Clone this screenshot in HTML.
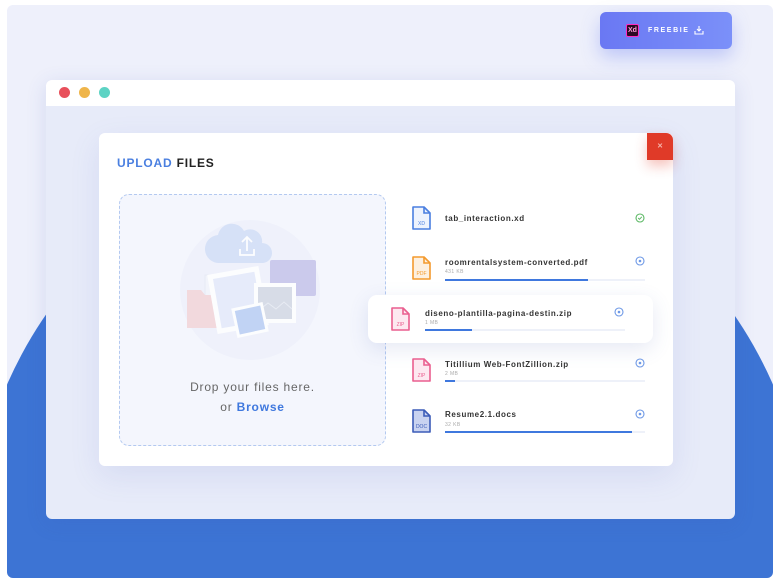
<!DOCTYPE html>
<html><head><meta charset="utf-8"><style>
*{margin:0;padding:0;box-sizing:border-box}
html,body{width:780px;height:586px;overflow:hidden}
body{background:#fff;font-family:"Liberation Sans",sans-serif;position:relative}
.outer{position:absolute;left:7px;top:5px;width:766px;height:573px;background:#eef0fb;border-radius:6px;overflow:hidden}
.hill{position:absolute;left:-35px;top:129px;width:836px;height:836px;border-radius:50%;background:#3d74d4}
.win{position:absolute;left:46px;top:80px;width:689px;height:439px;background:#e7ebf9;border-radius:6px;overflow:hidden;box-shadow:0 4px 20px rgba(60,90,180,.15)}
.bar{height:26px;background:#fff}
.dot{position:absolute;top:7px;width:11px;height:11px;border-radius:50%}
.card{position:absolute;left:99px;top:133px;width:574px;height:333px;background:#fff;border-radius:6px;box-shadow:0 10px 30px rgba(90,110,200,.12)}
.close{position:absolute;left:647px;top:133px;width:26px;height:27px;background:#e03a28;border-top-right-radius:7px;color:#f6b7ae;font-size:7px;text-align:center;line-height:27px;font-weight:bold;box-shadow:0 6px 12px rgba(224,58,40,.3)}
.title{position:absolute;left:117px;top:156px;font-size:12px;font-weight:bold;letter-spacing:.8px;color:#222}
.title span{color:#4a7fe0}
.drop{position:absolute;left:119px;top:194px;width:267px;height:252px;background:#f4f6fd;border:1.5px dashed #b3c9f0;border-radius:10px}
.dt{position:absolute;left:119px;width:267px;text-align:center;font-size:12px;color:#666;letter-spacing:.8px}
.dt b{color:#3f78de}
.name{position:absolute;font-size:8px;font-weight:bold;color:#333;letter-spacing:.6px}
.sz{position:absolute;font-size:5px;color:#aaa;letter-spacing:.4px}
.pb{position:absolute;height:2px;background:#eef1f9;width:200px}
.pb i{display:block;height:2px;background:#3f78de}
.ic{position:absolute}
.float{position:absolute;left:368px;top:295px;width:285px;height:48px;background:#fff;border-radius:9px;box-shadow:0 6px 20px rgba(80,100,180,.14)}
.free{position:absolute;left:600px;top:12px;width:132px;height:37px;border-radius:6px;background:linear-gradient(90deg,#6a78f3,#7b90f9);box-shadow:0 8px 18px rgba(100,120,240,.35);color:#fff;font-size:7px;letter-spacing:1.6px;font-weight:bold}
</style></head><body>
<div class="outer"><div class="hill"></div></div>
<div class="free"><div style="position:absolute;left:26px;top:12px;width:13px;height:13px;background:#2a0a24;border:1px solid #ff2bc2;border-radius:2px;color:#ff9bd8;font-size:7px;letter-spacing:0;line-height:11px;text-align:center">Xd</div><div style="position:absolute;left:48px;top:15px">FREEBIE</div>
<svg style="position:absolute;left:94px;top:13px" width="10" height="10" viewBox="0 0 10 10" fill="none" stroke="#fff" stroke-width="1.1"><path d="M5 1v5M3 4l2 2 2-2M1 6v3h8V6"/></svg></div>
<div class="win"><div class="bar"></div>
<div class="dot" style="left:13px;background:#e8505b"></div><div class="dot" style="left:33px;background:#efb54a"></div><div class="dot" style="left:53px;background:#5dd3c4"></div></div>
<div class="card"></div>
<div class="close">✕</div>
<div class="title"><span>UPLOAD</span> FILES</div>
<div class="drop"></div>
<svg class="ic" style="left:170px;top:215px;opacity:.8" width="160" height="150" viewBox="0 0 160 150">
<ellipse cx="80" cy="75" rx="70" ry="70" fill="#eef1fb"/>
<rect x="35" y="60" width="40" height="40" fill="#f2f4fb" stroke="#e4e8f4"/>
<rect x="100" y="45" width="46" height="36" rx="2" fill="#c2c0e8"/>
<path d="M17 75h14l4 5h20v33H17z" fill="#f2d2d6"/>
<path d="M48 20a14 14 0 0 1 26-4a12 12 0 0 1 18 12a10 10 0 0 1 0 20H50a14 14 0 0 1-2-28z" fill="#cfdcf6"/>
<path d="M77 22v14M72 27l5-5 5 5M70 34v6h14v-6" stroke="#fff" stroke-width="1.8" fill="none"/>
<g transform="rotate(-10 68 85)"><rect x="42" y="55" width="52" height="60" fill="#fff"/><rect x="47" y="60" width="42" height="50" fill="#e3e9fa"/></g>
<rect x="84" y="68" width="42" height="40" fill="#fff"/><rect x="88" y="72" width="34" height="32" fill="#d0d6e2"/>
<path d="M88 96l10-8 8 6 8-7 8 7" stroke="#e6eaf2" fill="none"/>
<g transform="rotate(-12 80 105)"><rect x="64" y="90" width="32" height="30" fill="#fff"/><rect x="67" y="93" width="26" height="24" fill="#b5cbf3"/></g>
</svg>
<div class="dt" style="top:380px">Drop your files here.</div>
<div class="dt" style="top:400px">or <b>Browse</b></div>

<svg class="ic" style="left:411px;top:205px" width="22" height="26" viewBox="0 0 22 26"><path d="M2 2h11l6 6v16H2z" fill="#eef3fd" stroke="#4a7fe0" stroke-width="1.6" stroke-linejoin="round"/><path d="M13 2v6h6" fill="none" stroke="#4a7fe0" stroke-width="1.6"/><text x="10.5" y="20" font-size="5" fill="#4a7fe0" text-anchor="middle" font-family="Liberation Sans">XD</text></svg>
<div class="name" style="left:445px;top:214px">tab_interaction.xd</div>
<svg class="ic" style="left:635px;top:213px" width="10" height="10"><circle cx="5" cy="5" r="4" fill="none" stroke="#5bb864" stroke-width="1.1"/><path d="M3.2 5l1.3 1.3 2.3-2.5" fill="none" stroke="#5bb864"/></svg>

<svg class="ic" style="left:411px;top:255px" width="22" height="26" viewBox="0 0 22 26"><path d="M2 2h11l6 6v16H2z" fill="#fdf0e0" stroke="#f39a2e" stroke-width="1.6" stroke-linejoin="round"/><path d="M13 2v6h6" fill="none" stroke="#f39a2e" stroke-width="1.6"/><text x="10.5" y="20" font-size="5" fill="#f39a2e" text-anchor="middle" font-family="Liberation Sans">PDF</text></svg>
<div class="name" style="left:445px;top:258px">roomrentalsystem-converted.pdf</div>
<div class="sz" style="left:445px;top:269px">431 KB</div>
<div class="pb" style="left:445px;top:279px"><i style="width:143px"></i></div>
<svg class="ic" style="left:635px;top:256px" width="10" height="10"><circle cx="5" cy="5" r="4" fill="none" stroke="#6d98e6" stroke-width="1.1"/><circle cx="5" cy="5" r="1.3" fill="#6d98e6"/></svg>

<div class="float"></div>
<svg class="ic" style="left:390px;top:306px" width="22" height="26" viewBox="0 0 22 26"><path d="M2 2h11l6 6v16H2z" fill="#fde8f0" stroke="#ea5f8f" stroke-width="1.6" stroke-linejoin="round"/><path d="M13 2v6h6" fill="none" stroke="#ea5f8f" stroke-width="1.6"/><text x="10.5" y="20" font-size="5" fill="#ea5f8f" text-anchor="middle" font-family="Liberation Sans">ZIP</text></svg>
<div class="name" style="left:425px;top:309px">diseno-plantilla-pagina-destin.zip</div>
<div class="sz" style="left:425px;top:320px">1 MB</div>
<div class="pb" style="left:425px;top:329px"><i style="width:47px"></i></div>
<svg class="ic" style="left:614px;top:307px" width="10" height="10"><circle cx="5" cy="5" r="4" fill="none" stroke="#6d98e6" stroke-width="1.1"/><circle cx="5" cy="5" r="1.3" fill="#6d98e6"/></svg>

<svg class="ic" style="left:411px;top:357px" width="22" height="26" viewBox="0 0 22 26"><path d="M2 2h11l6 6v16H2z" fill="#fde8f0" stroke="#ea5f8f" stroke-width="1.6" stroke-linejoin="round"/><path d="M13 2v6h6" fill="none" stroke="#ea5f8f" stroke-width="1.6"/><text x="10.5" y="20" font-size="5" fill="#ea5f8f" text-anchor="middle" font-family="Liberation Sans">ZIP</text></svg>
<div class="name" style="left:445px;top:360px">Titillium Web-FontZillion.zip</div>
<div class="sz" style="left:445px;top:371px">2 MB</div>
<div class="pb" style="left:445px;top:380px"><i style="width:10px"></i></div>
<svg class="ic" style="left:635px;top:358px" width="10" height="10"><circle cx="5" cy="5" r="4" fill="none" stroke="#6d98e6" stroke-width="1.1"/><circle cx="5" cy="5" r="1.3" fill="#6d98e6"/></svg>

<svg class="ic" style="left:411px;top:408px" width="22" height="26" viewBox="0 0 22 26"><path d="M2 2h11l6 6v16H2z" fill="#c9d3f0" stroke="#3c5cb8" stroke-width="1.6" stroke-linejoin="round"/><path d="M13 2v6h6" fill="none" stroke="#3c5cb8" stroke-width="1.6"/><text x="10.5" y="20" font-size="5" fill="#3c5cb8" text-anchor="middle" font-family="Liberation Sans">DOC</text></svg>
<div class="name" style="left:445px;top:410px">Resume2.1.docs</div>
<div class="sz" style="left:445px;top:422px">32 KB</div>
<div class="pb" style="left:445px;top:431px"><i style="width:187px"></i></div>
<svg class="ic" style="left:635px;top:409px" width="10" height="10"><circle cx="5" cy="5" r="4" fill="none" stroke="#6d98e6" stroke-width="1.1"/><circle cx="5" cy="5" r="1.3" fill="#6d98e6"/></svg>
</body></html>
